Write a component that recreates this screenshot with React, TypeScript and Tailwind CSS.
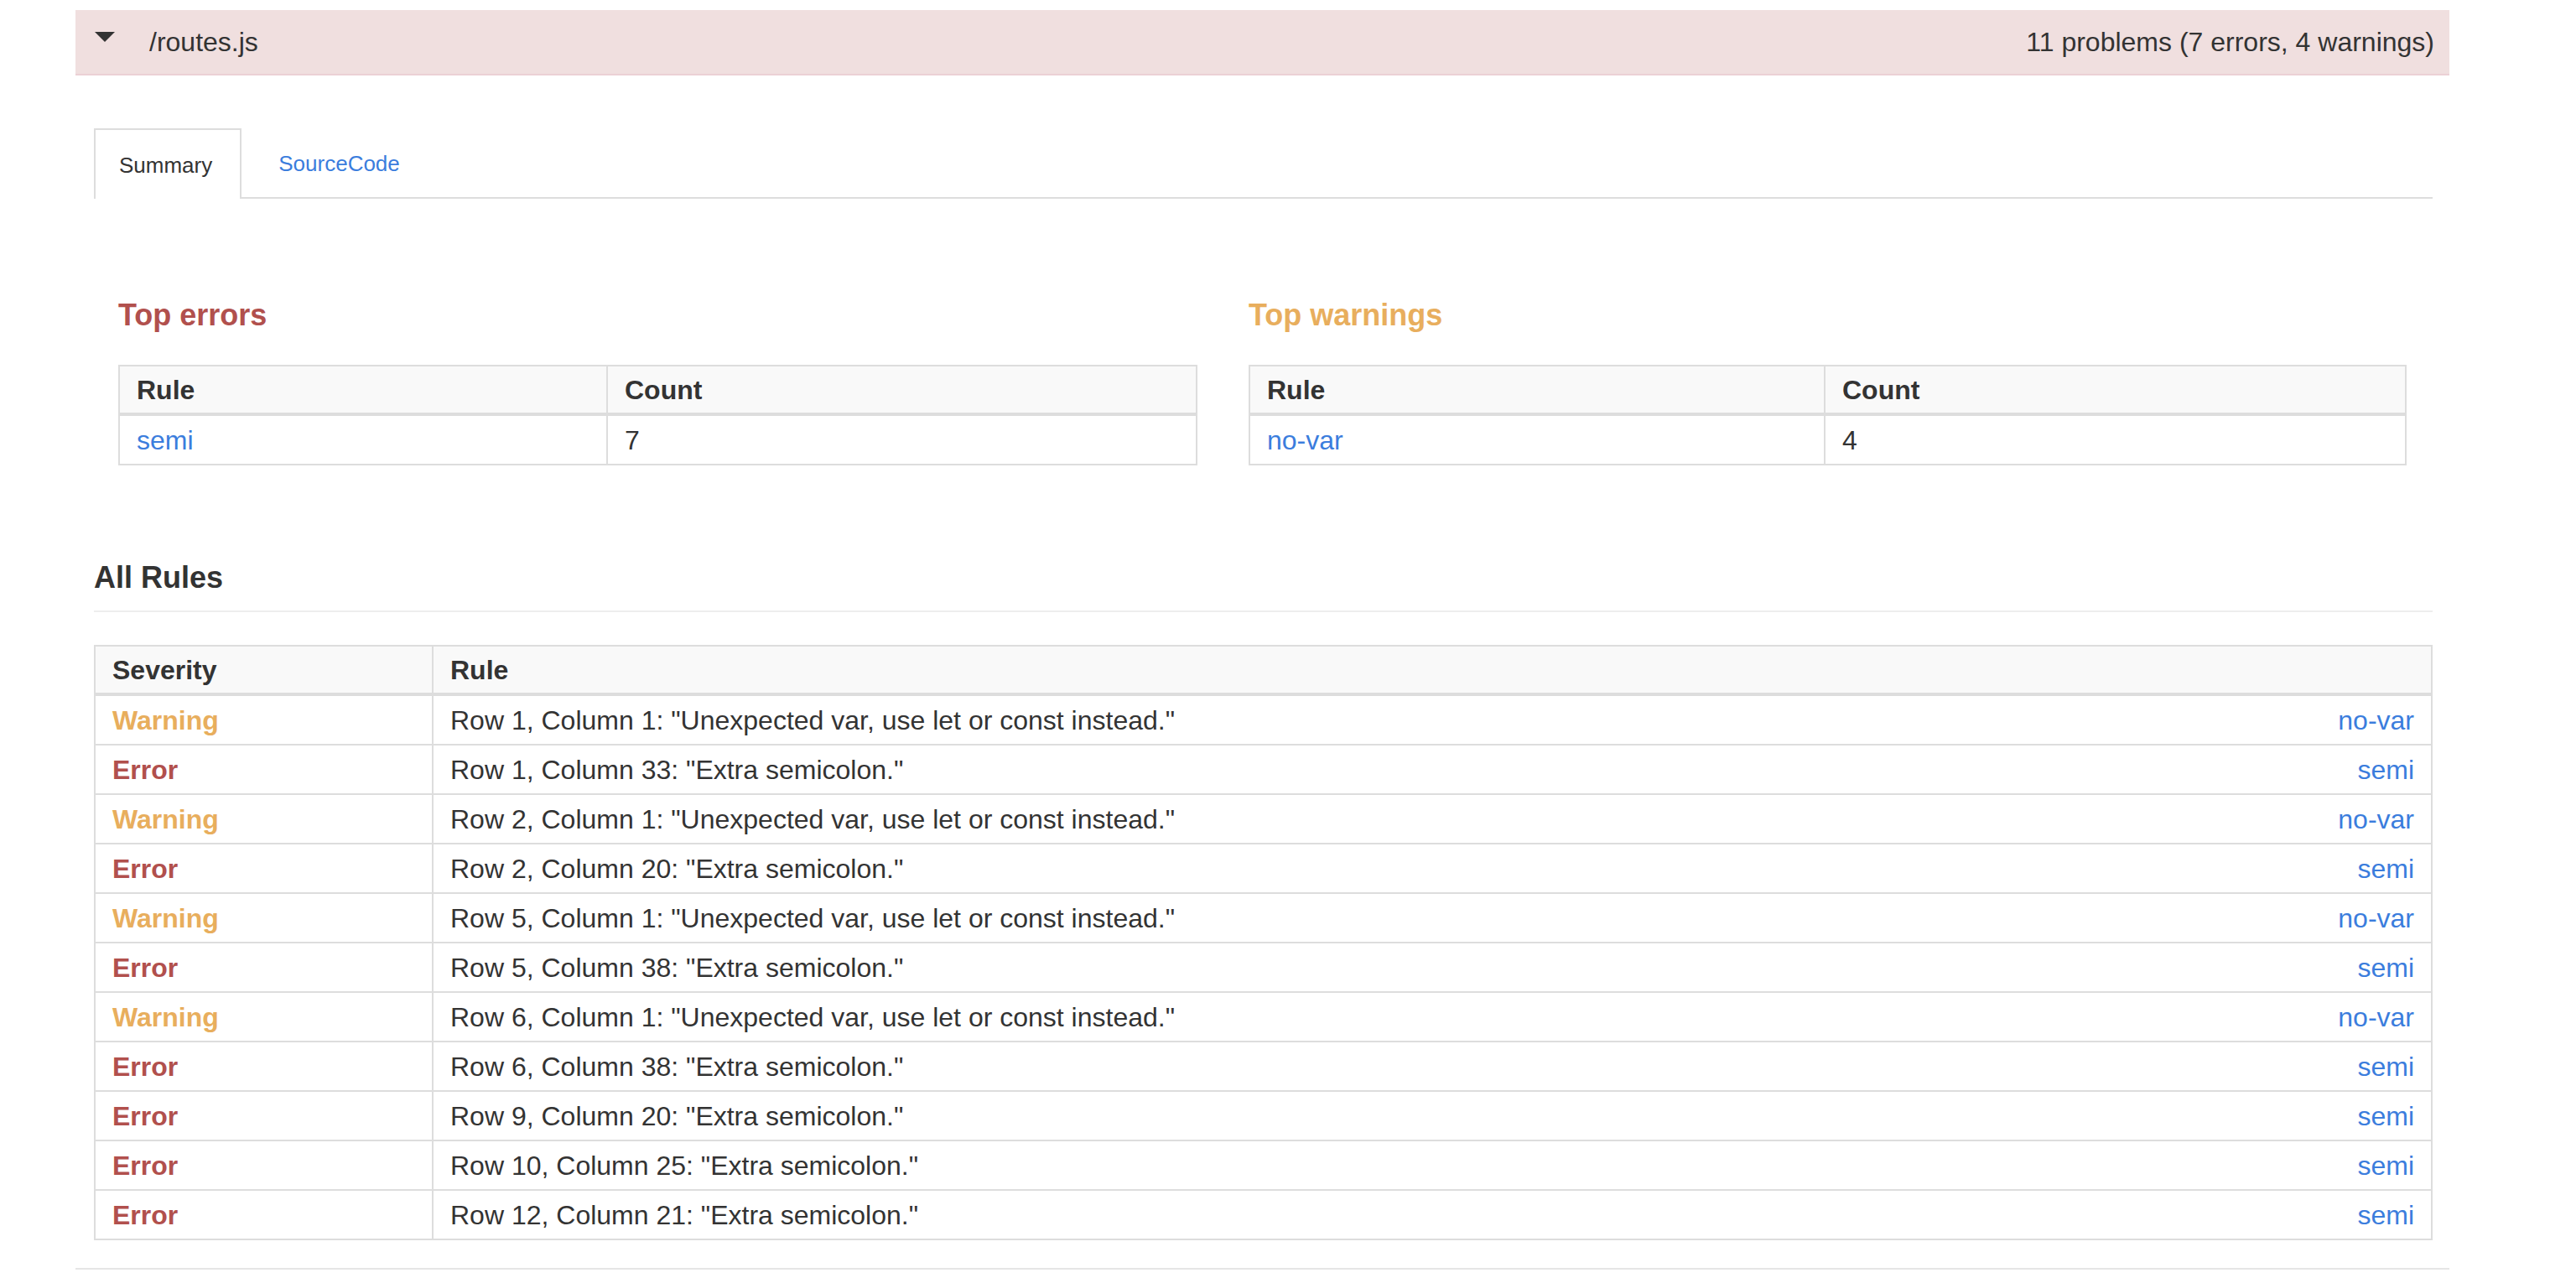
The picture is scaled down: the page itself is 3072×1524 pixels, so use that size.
const RULES = [
  { severity: "Warning", message: 'Row 1, Column 1: "Unexpected var, use let or const instead."', rule: "no-var" },
  { severity: "Error", message: 'Row 1, Column 33: "Extra semicolon."', rule: "semi" },
  { severity: "Warning", message: 'Row 2, Column 1: "Unexpected var, use let or const instead."', rule: "no-var" },
  { severity: "Error", message: 'Row 2, Column 20: "Extra semicolon."', rule: "semi" },
  { severity: "Warning", message: 'Row 5, Column 1: "Unexpected var, use let or const instead."', rule: "no-var" },
  { severity: "Error", message: 'Row 5, Column 38: "Extra semicolon."', rule: "semi" },
  { severity: "Warning", message: 'Row 6, Column 1: "Unexpected var, use let or const instead."', rule: "no-var" },
  { severity: "Error", message: 'Row 6, Column 38: "Extra semicolon."', rule: "semi" },
  { severity: "Error", message: 'Row 9, Column 20: "Extra semicolon."', rule: "semi" },
  { severity: "Error", message: 'Row 10, Column 25: "Extra semicolon."', rule: "semi" },
  { severity: "Error", message: 'Row 12, Column 21: "Extra semicolon."', rule: "semi" },
];

const TH = "text-left font-bold px-[20px] pt-[2px] leading-[53px] border-2 border-b-4 border-[#ddd]";
const TD = "px-[20px] pt-[2px] leading-[55px] border-2 border-[#ddd]";

function TopTable({
  title,
  titleClass,
  rule,
  count,
  firstCol,
}: {
  title: string;
  titleClass: string;
  rule: string;
  count: number;
  firstCol: string;
}) {
  return (
    <div>
      <h3 className={`pt-[2px] text-[36px] font-bold leading-[40px] ${titleClass}`}>{title}</h3>
      <table className="w-full mt-[39px] border-collapse border-2 border-[#ddd]">
        <thead>
          <tr className="bg-[#f9f9f9]">
            <th className={`${firstCol} ${TH}`}>Rule</th>
            <th className={TH}>Count</th>
          </tr>
        </thead>
        <tbody>
          <tr>
            <td className={TD}>
              <a className="text-[#3b7ddd]">{rule}</a>
            </td>
            <td className={TD}>{count}</td>
          </tr>
        </tbody>
      </table>
    </div>
  );
}

export default function App() {
  return (
    <div className="min-h-screen bg-white pt-[12px] text-[32px] text-[#333] font-['Liberation_Sans',Arial,sans-serif]">
      <div className="ml-[90px] w-[2831px]">
        {/* file header */}
        <div className="h-[78px] flex items-center justify-between bg-[#f0dfdf] border-b-2 border-[#ebd0d5] pl-[23px] pr-[18px]">
          <div className="flex items-center">
            <svg width="24" height="12" viewBox="0 0 24 12" className="mb-[12px]">
              <polygon points="0,0 24,0 12,12" fill="#333" />
            </svg>
            <span className="ml-[41px]">/routes.js</span>
          </div>
          <span>11 problems (7 errors, 4 warnings)</span>
        </div>

        <div className="ml-[22px] w-[2789px]">
          {/* tabs */}
          <div className="mt-[63px] flex border-b-2 border-[#ddd] text-[26px]">
            <div className="h-[84px] -mb-[2px] flex items-center pt-[2px] pl-[28px] pr-[33px] bg-white border-2 border-b-0 border-[#ddd]">
              Summary
            </div>
            <div className="h-[82px] flex items-center pt-[2px] pl-[44px] text-[#3b7ddd]">SourceCode</div>
          </div>

          {/* summary */}
          <div className="mt-[117px] ml-[29px] grid grid-cols-[1287px_1381px] gap-x-[61px]">
            <TopTable title="Top errors" titleClass="text-[#b1504d]" rule="semi" count={7} firstCol="w-[582px]" />
            <TopTable title="Top warnings" titleClass="text-[#e8ae5d]" rule="no-var" count={4} firstCol="w-[686px]" />
          </div>

          {/* all rules */}
          <h2 className="mt-[112px] pt-[2px] text-[36px] font-bold leading-[40px] pb-[19px] border-b-2 border-[#eee]">
            All Rules
          </h2>
          <table className="w-full mt-[39px] border-collapse border-2 border-[#ddd]">
            <thead>
              <tr className="bg-[#f9f9f9]">
                <th className={`w-[403px] ${TH}`}>Severity</th>
                <th className={TH}>Rule</th>
              </tr>
            </thead>
            <tbody>
              {RULES.map((r, i) => (
                <tr key={i}>
                  <td className={`${TD} font-bold ${r.severity === "Error" ? "text-[#b1504d]" : "text-[#e8ae5d]"}`}>
                    {r.severity}
                  </td>
                  <td className={TD}>
                    <div className="flex justify-between">
                      <span>{r.message}</span>
                      <a className="text-[#3b7ddd]">{r.rule}</a>
                    </div>
                  </td>
                </tr>
              ))}
            </tbody>
          </table>
        </div>

        <div className="mt-[33px] border-t-2 border-[#e5e5e5]" />
      </div>
    </div>
  );
}
